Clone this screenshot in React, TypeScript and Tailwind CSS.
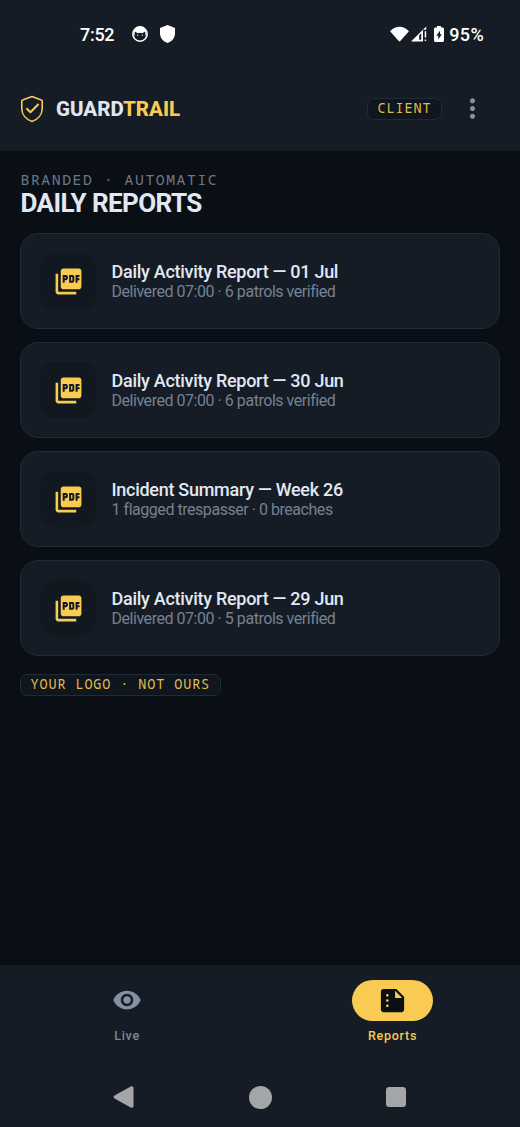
import { MdMoreVert, MdPictureAsPdf, MdSummarize, MdVisibility } from "react-icons/md";

const ShieldCheckIcon = (props: React.SVGProps<SVGSVGElement>) => (
  <svg viewBox="0 0 24 28" fill="none" stroke="currentColor" strokeWidth="1.6" strokeLinecap="round" strokeLinejoin="round" {...props}>
    <path d="M12 1.600 21.300 5c.6.3.9.7.9 1.300v7.400c0 5.900-4.300 10.700-10.200 12.700C6.100 24.400 1.800 19.600 1.800 13.700V6.300c0-.6.3-1 .9-1.300z" />
    <path d="m6.400 13.300 4 4 8.200-8.300" strokeWidth="2" strokeLinecap="butt" />
  </svg>
);

const CatIcon = (props: React.SVGProps<SVGSVGElement>) => (
  <svg viewBox="0 0 16 16" {...props}>
    <circle cx="8" cy="8" r="7.200" fill="none" stroke="currentColor" strokeWidth="1.500" />
    <path d="M1 7C1.800 3 4.500.8 8 .8s6.200 2.200 7 6.200l-1.500 3.500-.3-5-3 1.700a7 7 0 0 0-4.400 0l-3-1.700-.3 5z" fill="currentColor" />
    <circle cx="5.700" cy="9.200" r=".6" fill="currentColor" />
    <circle cx="10.300" cy="9.200" r=".6" fill="currentColor" />
  </svg>
);

const ShieldIcon = (props: React.SVGProps<SVGSVGElement>) => (
  <svg viewBox="0 0 15 18" fill="currentColor" {...props}>
    <path d="M7.500 0 15 3v5.500c0 4.300-3 7.800-7.500 9.500C3 16.300 0 12.800 0 8.500V3z" />
  </svg>
);

const WifiIcon = (props: React.SVGProps<SVGSVGElement>) => (
  <svg viewBox="0 0 20 16" fill="currentColor" {...props}>
    <path d="M.6 4.500C6-.9 14-.9 19.400 4.500c.4.4.4.800.1 1.100l-8.700 9.700c-.5.500-1.100.5-1.600 0L.5 5.600c-.3-.4-.3-.8.1-1.100z" />
  </svg>
);

const SignalIcon = (props: React.SVGProps<SVGSVGElement>) => (
  <svg viewBox="0 0 17 16" fill="currentColor" {...props}>
    <path fillRule="evenodd" d="M0 15.500 15.200.5v3.300H12v11.700zM8.200 9.300v4.500h2V7.300z" />
    <path d="M13.700 5.300h1.500v6.200h-1.500zM13.700 13.500h1.500V15h-1.500z" />
  </svg>
);

const BatteryIcon = (props: React.SVGProps<SVGSVGElement>) => (
  <svg viewBox="0 0 10 16" fill="currentColor" {...props}>
    <path fillRule="evenodd" d="M3 0h4v1.500h1.500c.9 0 1.500.6 1.500 1.500v11.500c0 .9-.6 1.500-1.500 1.500h-7C.6 16 0 15.400 0 14.500V3c0-.9.6-1.500 1.500-1.500H3zM6.100 4.500 2.300 9.700h2v3.800l3.500-5.200H6z" />
  </svg>
);

const reports = [
  { title: "Daily Activity Report — 01 Jul", detail: "Delivered 07:00 · 6 patrols verified" },
  { title: "Daily Activity Report — 30 Jun", detail: "Delivered 07:00 · 6 patrols verified" },
  { title: "Incident Summary — Week 26", detail: "1 flagged trespasser · 0 breaches" },
  { title: "Daily Activity Report — 29 Jun", detail: "Delivered 07:00 · 5 patrols verified" },
];

function Tag({ children }: { children: React.ReactNode }) {
  return (
    <span className="inline-flex h-[22px] items-center whitespace-nowrap rounded-[7px] border border-[#222a35] bg-[#10161e] px-[9.500px] font-['Noto_Sans_Mono','DejaVu_Sans_Mono',monospace] text-[13.5px] leading-none tracking-[0.88px] text-[#e3bb4e]">
      {children}
    </span>
  );
}

function StatusBar() {
  return (
    <div className="flex h-[68px] items-center justify-between pl-[80px] pr-[36px] text-[18px] font-medium text-white">
      <div className="flex items-center">
        <span className="w-[52px] tracking-[-0.3px]">7:52</span>
        <CatIcon className="h-4 w-4" />
        <ShieldIcon className="ml-[12px] h-[18px] w-[15px]" />
      </div>
      <div className="flex items-center">
        <WifiIcon className="h-4 w-[19px]" />
        <SignalIcon className="ml-[2px] h-4 w-[17px]" />
        <BatteryIcon className="ml-[6px] h-4 w-[10px]" />
        <span className="ml-[5px] tracking-[0.35px]">95%</span>
      </div>
    </div>
  );
}

export default function App() {
  return (
    <div className="flex h-[1127px] w-[520px] flex-col overflow-hidden bg-[#0a0f16] font-[Roboto,sans-serif]">
      <header className="h-[151px] shrink-0 bg-[#151c25]">
        <StatusBar />
        <div className="flex h-[81px] items-center pl-[20px] pr-[32px]">
          <ShieldCheckIcon className="h-[28px] w-[24px] text-[#f9cb50]" />
          <h1 className="ml-[12px] pt-px text-[20.5px] font-extrabold leading-none text-[#dfe6f2]">
            GUARD<span className="text-[#f9cb50]">TRAIL</span>
          </h1>
          <div className="ml-auto flex items-center gap-[15px]">
            <Tag>CLIENT</Tag>
            <MdMoreVert className="h-[31px] w-[31px] text-[#8490a2]" />
          </div>
        </div>
      </header>

      <main className="flex-1 px-[20px] pt-[19px]">
        <p className="pl-[0.500px] font-['Noto_Sans_Mono','DejaVu_Sans_Mono',monospace] text-[14.8px] leading-[18px] tracking-[1.53px] text-[#6d7888]">
          BRANDED · AUTOMATIC
        </p>
        <h2 className="mt-px pl-[0.500px] text-[26px] font-bold leading-[28px] tracking-[-0.58px] text-[#e2e8f3]">DAILY REPORTS</h2>

        <div className="mt-[16px] flex flex-col gap-[13px]">
          {reports.map((report) => (
            <div key={report.title} className="flex h-[96px] items-center rounded-[18px] border border-[#222a35] bg-[#151c25] pl-[19px]">
              <div className="flex h-[56px] w-[56px] items-center justify-center rounded-[14px] bg-[#111820]">
                <MdPictureAsPdf className="h-[31px] w-[31px] text-[#f9cb50]" />
              </div>
              <div className="ml-[15.500px]">
                <h3 className="text-[18px] font-medium leading-[20px] tracking-[-0.28px] text-[#e2e8f3]">{report.title}</h3>
                <p className="text-[16px] leading-[19px] tracking-[-0.46px] text-[#768191]">{report.detail}</p>
              </div>
            </div>
          ))}
        </div>

        <div className="mt-[18px] flex">
          <Tag>YOUR LOGO · NOT OURS</Tag>
        </div>
      </main>

      <footer className="h-[162px] shrink-0 bg-[#151c25]">
        <nav className="grid h-[102px] grid-cols-[254px_277px] pt-[15px] text-[12.5px] font-medium tracking-[0.74px]">
          <div className="flex flex-col items-center text-[#7c8798]">
            <div className="flex h-[40px] items-center">
              <MdVisibility className="h-[30px] w-[30px] text-[#8490a2]" />
            </div>
            <span className="mt-[7px]">Live</span>
          </div>
          <div className="flex flex-col items-center text-[#f9cb50]">
            <div className="flex h-[41px] w-[81px] items-center justify-center rounded-full bg-[#f9cb53]">
              <MdSummarize className="h-[31px] w-[31px] text-[#0b1017]" />
            </div>
            <span className="mt-[6px]">Reports</span>
          </div>
        </nav>
        <div className="flex h-[60px] items-center justify-between pl-[113px] pr-[114px] text-[#a3a5a8]">
          <svg viewBox="0 0 21 22" className="h-[22px] w-[21px]" fill="currentColor">
            <path d="M1.500 9.600 17.700.4c1.400-.7 2.800.1 2.800 1.600v18c0 1.500-1.400 2.300-2.800 1.600L1.500 12.400c-1.300-.8-1.300-2 0-2.800z" />
          </svg>
          <div className="h-[23px] w-[23px] rounded-full bg-[#a3a5a8]" />
          <div className="h-5 w-5 rounded-[3px] bg-[#a3a5a8]" />
        </div>
      </footer>
    </div>
  );
}
